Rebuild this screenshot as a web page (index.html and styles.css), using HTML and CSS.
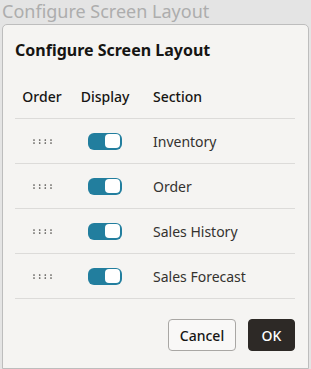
FILE: index.html
```html
<!DOCTYPE html>
<html>
<head>
<meta charset="utf-8">
<link rel="stylesheet" href="styles.css">
</head>
<body>
<div class="page-title">Configure Screen Layout</div>
<div class="dialog">
  <div class="dialog-title">Configure Screen Layout</div>
  <div class="table">
    <div class="row head">
      <div class="c1">Order</div>
      <div class="c2">Display</div>
      <div class="c3">Section</div>
    </div>
    <div class="row">
      <div class="c1"><svg class="handle" viewBox="0 0 19 5" width="19" height="5"><g fill="#4f4d4a"><circle cx="1" cy="1" r="0.85"/><circle cx="6.7" cy="1" r="0.85"/><circle cx="12.3" cy="1" r="0.85"/><circle cx="18" cy="1" r="0.85"/><circle cx="1" cy="4" r="0.85"/><circle cx="6.7" cy="4" r="0.85"/><circle cx="12.3" cy="4" r="0.85"/><circle cx="18" cy="4" r="0.85"/></g></svg></div>
      <div class="c2"><span class="toggle"><span class="knob"></span></span></div>
      <div class="c3">Inventory</div>
    </div>
    <div class="row">
      <div class="c1"><svg class="handle" viewBox="0 0 19 5" width="19" height="5"><g fill="#4f4d4a"><circle cx="1" cy="1" r="0.85"/><circle cx="6.7" cy="1" r="0.85"/><circle cx="12.3" cy="1" r="0.85"/><circle cx="18" cy="1" r="0.85"/><circle cx="1" cy="4" r="0.85"/><circle cx="6.7" cy="4" r="0.85"/><circle cx="12.3" cy="4" r="0.85"/><circle cx="18" cy="4" r="0.85"/></g></svg></div>
      <div class="c2"><span class="toggle"><span class="knob"></span></span></div>
      <div class="c3">Order</div>
    </div>
    <div class="row">
      <div class="c1"><svg class="handle" viewBox="0 0 19 5" width="19" height="5"><g fill="#4f4d4a"><circle cx="1" cy="1" r="0.85"/><circle cx="6.7" cy="1" r="0.85"/><circle cx="12.3" cy="1" r="0.85"/><circle cx="18" cy="1" r="0.85"/><circle cx="1" cy="4" r="0.85"/><circle cx="6.7" cy="4" r="0.85"/><circle cx="12.3" cy="4" r="0.85"/><circle cx="18" cy="4" r="0.85"/></g></svg></div>
      <div class="c2"><span class="toggle"><span class="knob"></span></span></div>
      <div class="c3">Sales History</div>
    </div>
    <div class="row">
      <div class="c1"><svg class="handle" viewBox="0 0 19 5" width="19" height="5"><g fill="#4f4d4a"><circle cx="1" cy="1" r="0.85"/><circle cx="6.7" cy="1" r="0.85"/><circle cx="12.3" cy="1" r="0.85"/><circle cx="18" cy="1" r="0.85"/><circle cx="1" cy="4" r="0.85"/><circle cx="6.7" cy="4" r="0.85"/><circle cx="12.3" cy="4" r="0.85"/><circle cx="18" cy="4" r="0.85"/></g></svg></div>
      <div class="c2"><span class="toggle"><span class="knob"></span></span></div>
      <div class="c3">Sales Forecast</div>
    </div>
  </div>
  <div class="actions">
    <button class="btn cancel">Cancel</button>
    <button class="btn ok">OK</button>
  </div>
</div>
</body>
</html>
```
FILE: styles.css
```css
html, body {
  margin: 0;
  padding: 0;
  height: 100%;
}
body {
  background: #e4e4e4;
  font-family: "Noto Sans", "Open Sans", sans-serif;
  color: #1f1d1b;
  overflow: hidden;
}
.page-title {
  height: 24px;
  line-height: 22px;
  padding-left: 2px;
  font-size: 18px;
  color: #adadad;
  white-space: nowrap;
}
.dialog {
  margin: 0 2px;
  height: 345px;
  box-sizing: border-box;
  background: #f5f4f2;
  border: 1px solid #bdbdbd;
  border-radius: 5px 5px 0 0;
  padding: 0 13px 0 12px;
}
.dialog-title {
  font-size: 16px;
  font-weight: 700;
  height: 49px;
  line-height: 50px;
  color: #161513;
}
.row {
  display: grid;
  grid-template-columns: 54px 72px 1fr;
  align-items: center;
  height: 44px;
  border-bottom: 1px solid #dcdbd9;
  font-size: 14px;
  color: #34322f;
}
.row.head {
  color: #161513;
  font-weight: 500;
}
.c1, .c2 {
  display: flex;
  justify-content: center;
  align-items: center;
}
.handle {
  display: block;
}
.c3 {
  padding-left: 12px;
}
.toggle {
  display: block;
  position: relative;
  width: 34px;
  height: 17px;
  border-radius: 6px;
  background: #227e9e;
}
.knob {
  position: absolute;
  right: 2px;
  top: 1.5px;
  width: 15px;
  height: 14px;
  border-radius: 4px;
  background: #ffffff;
}
.actions {
  display: flex;
  justify-content: flex-end;
  gap: 12px;
  margin-top: 20px;
}
.btn {
  height: 32px;
  font-family: inherit;
  font-size: 14px;
  font-weight: 500;
  border-radius: 4px;
  padding: 0;
}
.cancel {
  width: 68px;
  background: #f9f8f7;
  border: 1px solid #a9a7a4;
  color: #161513;
}
.ok {
  width: 47px;
  background: #2d2926;
  border: 1px solid #2d2926;
  color: #ffffff;
}
```
